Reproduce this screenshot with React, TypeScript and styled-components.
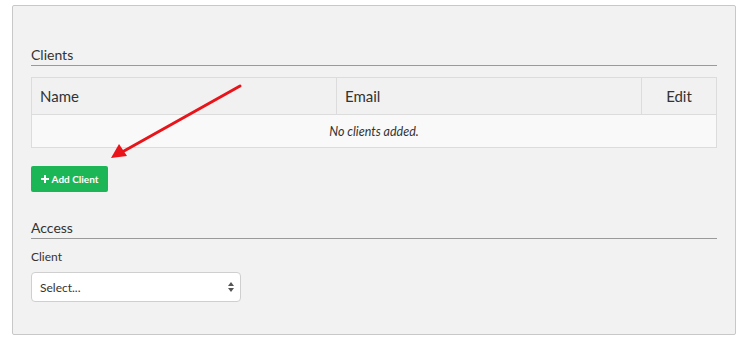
import { FC } from 'react';
import styled, { createGlobalStyle } from 'styled-components';

const GlobalStyle = createGlobalStyle`
  html, body {
    margin: 0;
    padding: 0;
    background: #fff;
    font-family: Lato, "Noto Sans", "Liberation Sans", sans-serif;
    color: #333;
  }
`;

const Page = styled.div`
  position: relative;
  width: 752px;
  height: 352px;
  padding: 5px 0 0 12px;
  box-sizing: border-box;
`;

const Panel = styled.div`
  width: 724px;
  height: 330px;
  box-sizing: border-box;
  background: #f2f2f2;
  border: 1px solid #c8c8c8;
  border-radius: 2px;
  padding: 40px 18px 0 18px;
`;

const SectionTitle = styled.div`
  font-size: 14px;
  line-height: 18px;
  color: #333;
  padding-bottom: 1px;
  border-bottom: 1px solid #9a9a9a;
`;

const Table = styled.table`
  width: 100%;
  margin-top: 11px;
  border-collapse: collapse;
  border: 1px solid #dcdcdc;
`;

const HeadCell = styled.th<{ $align?: 'left' | 'center' }>`
  text-align: ${(p) => p.$align ?? 'left'};
  font-weight: 400;
  font-size: 15px;
  height: 36px;
  padding: 0 8px;
  background: #f1f1f1;
  border: 1px solid #dcdcdc;
  color: #333;
`;

const EmptyCell = styled.td`
  height: 32px;
  padding: 0;
  text-align: center;
  font-style: italic;
  font-size: 12.5px;
  background: #f9f9f9;
  color: #333;
`;

const AddButton = styled.button`
  display: inline-flex;
  align-items: center;
  gap: 3px;
  margin-top: 18px;
  height: 26px;
  width: 77px;
  justify-content: center;
  padding: 0;
  border: none;
  border-radius: 2px;
  background: #1db657;
  color: #fff;
  font-family: inherit;
  font-size: 10px;
  font-weight: 700;
  cursor: pointer;
`;

const AccessSection = styled.div`
  margin-top: 27px;
`;

const Label = styled.div`
  margin-top: 10px;
  font-size: 12px;
  line-height: 16px;
`;

const SelectBox = styled.div`
  margin-top: 7px;
  width: 210px;
  height: 30px;
  box-sizing: border-box;
  background: #fff;
  border: 1px solid #cfcfcf;
  border-radius: 4px;
  display: flex;
  align-items: center;
  justify-content: space-between;
  padding: 0 6px 0 8px;
  font-size: 12px;
  color: #333;
`;

const Arrow = styled.svg`
  position: absolute;
  left: 0;
  top: 0;
  pointer-events: none;
`;

const Plus: FC = () => (
  <svg width="8" height="8" viewBox="0 0 8 8">
    <path d="M3 0h2v3h3v2H5v3H3V5H0V3h3z" fill="#fff" />
  </svg>
);

const Spinner: FC = () => (
  <svg width="6" height="12" viewBox="0 0 6 12">
    <path d="M3 1L6 5H0z" fill="#555" />
    <path d="M3 11L0 7h6z" fill="#555" />
  </svg>
);

const App: FC = () => (
  <>
    <GlobalStyle />
    <Page>
      <Panel>
        <SectionTitle>Clients</SectionTitle>
        <Table>
          <thead>
            <tr>
              <HeadCell style={{ width: 288 }}>Name</HeadCell>
              <HeadCell style={{ width: 288 }}>Email</HeadCell>
              <HeadCell $align="center">Edit</HeadCell>
            </tr>
          </thead>
          <tbody>
            <tr>
              <EmptyCell colSpan={3}>No clients added.</EmptyCell>
            </tr>
          </tbody>
        </Table>
        <AddButton>
          <Plus />
          Add Client
        </AddButton>
        <AccessSection>
          <SectionTitle>Access</SectionTitle>
          <Label>Client</Label>
          <SelectBox>
            <span>Select...</span>
            <Spinner />
          </SelectBox>
        </AccessSection>
      </Panel>
      <Arrow width="752" height="352" viewBox="0 0 752 352">
        <line x1="240" y1="86" x2="124" y2="151" stroke="#e8141a" strokeWidth="3" strokeLinecap="round" />
        <path d="M111 158L119 144L127 156z" fill="#e8141a" />
      </Arrow>
    </Page>
  </>
);

export default App;
